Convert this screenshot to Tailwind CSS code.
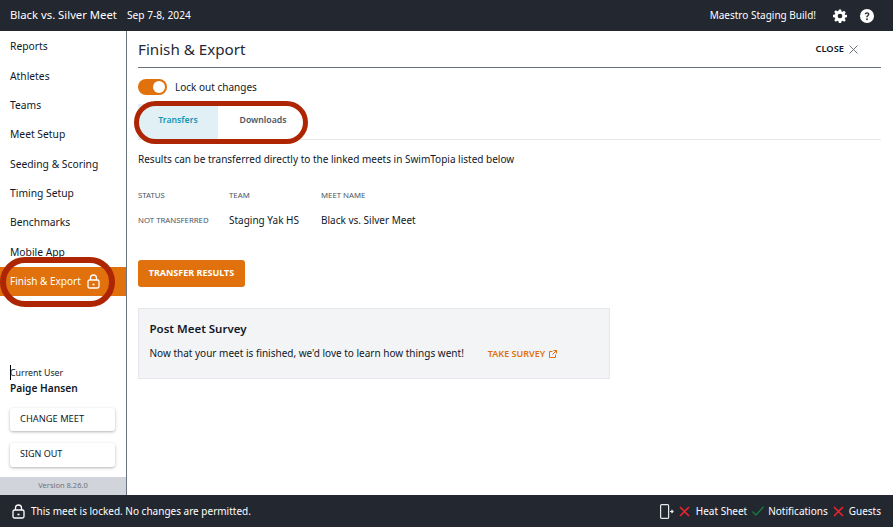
<!DOCTYPE html>
<html lang="en">
<head>
  <meta charset="UTF-8">
  <title>Finish &amp; Export</title>
  <script src="https://cdn.jsdelivr.net/npm/@tailwindcss/browser@4"></script>
</head>
<body class="bg-white text-[#111827] font-['Noto_Sans',sans-serif]">
  <div class="relative flex flex-col h-[529px] w-[893px] overflow-hidden">
    <!-- top bar -->
    <header class="flex items-center h-[31px] shrink-0 bg-[#232730] text-white pl-[10px] pr-[19px] text-[10px]">
      <span class="text-[11.300px]">Black vs. Silver Meet</span>
      <span class="ml-[10px] text-[10.200px]">Sep 7-8, 2024</span>
      <span class="ml-auto">Maestro Staging Build!</span>
      <svg class="ml-[17px] w-[14px] h-[14px]" viewBox="0 0 24 24" fill="#fff"><path fill-rule="evenodd" d="M10 1h4l.6 3.1 1.9.8 2.6-1.8 2.8 2.8-1.8 2.6.8 1.9L24 10v4l-3.1.6-.8 1.9 1.8 2.6-2.8 2.8-2.6-1.8-1.9.8L14 24h-4l-.6-3.1-1.9-.8-2.6 1.8-2.8-2.8 1.8-2.6-.8-1.9L0 14v-4l3.1-.6.8-1.9-1.8-2.6 2.8-2.8 2.6 1.8 1.9-.8zM12 8a4 4 0 1 0 0 8 4 4 0 0 0 0-8z"/></svg>
      <svg class="ml-[13px] w-[14px] h-[14px]" viewBox="0 0 24 24"><circle cx="12" cy="12" r="12" fill="#fff"/><path d="M8 9.200c0-2.300 1.800-3.700 4.100-3.700 2.200 0 4 1.300 4 3.400 0 2.900-3 2.800-3 5.100h-2.500c0-3.300 3-3.200 3-5 0-.9-.7-1.400-1.500-1.400-1 0-1.600.7-1.700 1.600z" fill="#232730"/><circle cx="12" cy="17.500" r="1.600" fill="#232730"/></svg>
    </header>

    <div class="flex flex-1 min-h-0">
      <!-- sidebar -->
      <aside class="flex flex-col w-[127px] shrink-0 border-r border-[#6b7280] text-[10.300px]">
        <nav class="flex flex-col pt-[1.500px]">
          <a class="flex items-center h-[29.300px] pl-[10px]">Reports</a>
          <a class="flex items-center h-[29.300px] pl-[10px]">Athletes</a>
          <a class="flex items-center h-[29.300px] pl-[10px]">Teams</a>
          <a class="flex items-center h-[29.300px] pl-[10px]">Meet Setup</a>
          <a class="flex items-center h-[29.300px] pl-[10px]">Seeding &amp; Scoring</a>
          <a class="flex items-center h-[29.300px] pl-[10px]">Timing Setup</a>
          <a class="flex items-center h-[29.300px] pl-[10px]">Benchmarks</a>
          <a class="flex items-center h-[29.300px] pl-[10px]">Mobile App</a>
          <a class="flex items-center h-[29.300px] pl-[10px] bg-[#e0710d] text-white text-[10px]">Finish &amp; Export
            <svg class="ml-[6px] w-[13px] h-[15px]" viewBox="0 0 13 15" fill="none" stroke="#fff" stroke-width="1.300"><rect x="1" y="6" width="11" height="8" rx="1.500"/><path d="M3.500 6V4a3 3 0 0 1 6 0v2"/><path d="M5.500 10.500h2" stroke-width="1.600"/></svg>
          </a>
        </nav>
        <div class="mt-auto pl-[10px] pr-[11px] pb-[10px]">
          <div class="text-[8.800px] leading-[14px] border-l border-black w-fit [text-indent:-1px] pt-[1px]">Current User</div>
          <div class="text-[10.200px] leading-[16px] font-semibold">Paige Hansen</div>
          <button class="block w-full h-[23px] mt-[12px] pl-[10px] pb-[2px] text-left text-[9.300px] rounded-[3px] bg-white shadow-[0_1px_3px_rgba(0,0,0,0.3)]">CHANGE MEET</button>
          <button class="block w-full h-[24px] mt-[12px] pl-[10px] pb-[2px] text-left text-[9px] rounded-[3px] bg-white shadow-[0_1px_3px_rgba(0,0,0,0.3)]">SIGN OUT</button>
        </div>
        <div class="flex items-center justify-center h-[18px] bg-[#d1d5db] text-[#6b7280] text-[7.500px]">Version 8.26.0</div>
      </aside>

      <!-- main -->
      <main class="flex-1 min-w-0 pl-[11px] pr-[12px] text-[10px]">
        <div class="flex items-center justify-between h-[37px] border-b border-[#6b7280]">
          <h1 class="text-[15.200px] text-[#1f2937] pt-[1px]">Finish &amp; Export</h1>
          <button class="flex items-center gap-[5px] pr-[23px] text-[9.300px] font-semibold">CLOSE
            <svg class="w-[9px] h-[9px]" viewBox="0 0 9 9" stroke="#6b7280" stroke-width="1"><path d="M.5.500l8 8M8.500.500l-8 8"/></svg>
          </button>
        </div>
        <div class="flex items-center h-[16px] mt-[11px]">
          <span class="relative w-[29px] h-[16px] rounded-full bg-[#e0710d]"><span class="absolute right-[2px] top-[2px] w-[12px] h-[12px] rounded-full bg-white"></span></span>
          <span class="ml-[8px] pt-[1px]">Lock out changes</span>
        </div>
        <div class="flex h-[36px] mt-[9px] border-b border-[#e5e7eb] text-[8.700px] font-semibold">
          <button class="w-[80px] bg-[#e0f0f5] text-[#1596b3] pb-[2px]">Transfers</button>
          <button class="w-[90px] text-[#4b5563] pb-[2px]">Downloads</button>
        </div>
        <p class="mt-[11px] leading-[16px]">Results can be transferred directly to the linked meets in SwimTopia listed below</p>
        <table class="mt-[20px] text-left">
          <thead>
            <tr class="h-[17px] text-[7.800px] text-[#4b5563]">
              <th class="w-[91px] font-normal">STATUS</th>
              <th class="w-[92px] font-normal">TEAM</th>
              <th class="font-normal">MEET NAME</th>
            </tr>
          </thead>
          <tbody>
            <tr class="h-[33px]">
              <td class="text-[7.800px] text-[#4b5563]">NOT TRANSFERRED</td>
              <td>Staging Yak HS</td>
              <td>Black vs. Silver Meet</td>
            </tr>
          </tbody>
        </table>
        <button class="block w-[107px] h-[27px] mt-[23px] rounded-[3px] bg-[#e0710d] text-white text-[9px] font-bold pb-[2px]">TRANSFER RESULTS</button>
        <section class="w-[472px] h-[71px] mt-[21px] pl-[10.500px] pt-[11px] bg-[#f3f4f6] border border-[#e5e7eb]">
          <h2 class="text-[11.500px] font-semibold leading-[18px]">Post Meet Survey</h2>
          <div class="flex items-center mt-[8px]">
            <span>Now that your meet is finished, we'd love to learn how things went!</span>
            <a class="flex items-center gap-[4px] ml-[24px] text-[9px] font-semibold text-[#e0710d]">TAKE SURVEY
              <svg class="w-[8px] h-[8px]" viewBox="0 0 8 8" fill="none" stroke="#e0710d" stroke-width="1"><path d="M6.500 4.500v3h-6v-6h3M4.500.500h3v3M7.500.500L3.500 4.500"/></svg>
            </a>
          </div>
        </section>
      </main>
    </div>

    <!-- status bar -->
    <footer class="flex items-center h-[32px] shrink-0 mb-[2px] bg-[#232730] text-white text-[10px] pl-[12px] pr-[12px]">
      <svg class="w-[13px] h-[15px]" viewBox="0 0 13 15" fill="none" stroke="#fff" stroke-width="1.300"><rect x="1" y="6" width="11" height="8" rx="1.500"/><path d="M3.500 6V4a3 3 0 0 1 6 0v2"/><path d="M5.500 10.500h2" stroke-width="1.600"/></svg>
      <span class="ml-[6px]">This meet is locked. No changes are permitted.</span>
      <svg class="ml-auto w-[14px] h-[15px]" viewBox="0 0 14 15" fill="none" stroke="#e5e7eb" stroke-width="1.200"><rect x=".6" y=".6" width="8" height="13.800" rx="1"/><path d="M10 7.500h2.500M11.500 6l1.500 1.500L11.500 9"/></svg>
      <svg class="ml-[5px] w-[11px] h-[11px]" viewBox="0 0 11 11" stroke="#e7232b" stroke-width="1.700"><path d="M1 1l9 9M10 1l-9 9"/></svg>
      <span class="ml-[6px]">Heat Sheet</span>
      <svg class="ml-[5px] w-[12px] h-[10px]" viewBox="0 0 12 10" fill="none" stroke="#15803d" stroke-width="1.300"><path d="M.5 5.500l3.500 3.500L11.500.8"/></svg>
      <span class="ml-[4px]">Notifications</span>
      <svg class="ml-[5px] w-[11px] h-[11px]" viewBox="0 0 11 11" stroke="#e7232b" stroke-width="1.700"><path d="M1 1l9 9M10 1l-9 9"/></svg>
      <span class="ml-[5px]">Guests</span>
    </footer>

    <!-- red annotation ovals -->
    <div class="absolute left-[134px] top-[101px] w-[174px] h-[43px] rounded-[22px] border-[5px] border-[#ad2502]"></div>
    <div class="absolute left-0 top-[257px] w-[115px] h-[50px] rounded-[25px] border-[6px] border-[#ad2502]"></div>
  </div>
</body>
</html>
